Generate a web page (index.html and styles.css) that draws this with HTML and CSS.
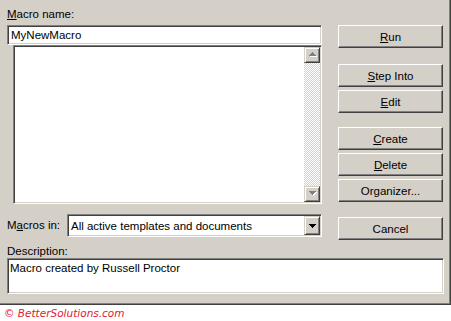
FILE: index.html
```html
<!DOCTYPE html>
<html lang="en">
<head>
    <meta charset="UTF-8">
    <title>Macros</title>
    <link rel="stylesheet" href="styles.css">
</head>
<body>
    <div class="dialog">
        <div class="main">
            <div class="left">
                <label class="label name-label"><span class="key">M</span>acro name:</label>
                <div class="field name-field">MyNewMacro</div>
                <div class="field listbox">
                    <div class="list-items"></div>
                    <div class="scrollbar">
                        <div class="scroll-btn">
                            <svg width="9" height="6" viewBox="0 0 9 6">
                                <path d="M5 1h1v1h1v1h1v1h1v1H2V4h1V3h1V2h1z" fill="#fff"></path>
                                <path d="M4 0h1v1h1v1h1v1h1v1H1V3h1V2h1V1h1z" fill="#808080"></path>
                            </svg>
                        </div>
                        <div class="track"></div>
                        <div class="scroll-btn">
                            <svg width="9" height="6" viewBox="0 0 9 6">
                                <path d="M2 1h7v1H8v1H7v1H6v1H5V4H4V3H3V2H2z" fill="#fff"></path>
                                <path d="M1 0h7v1H7v1H6v1H5v1H4V3H3V2H2V1H1z" fill="#808080"></path>
                            </svg>
                        </div>
                    </div>
                </div>
                <div class="macros-in">
                    <label class="label in-label">M<span class="key">a</span>cros in:</label>
                    <div class="field combo">
                        <span class="combo-text">All active templates and documents</span>
                        <div class="scroll-btn combo-btn">
                            <svg width="7" height="4" viewBox="0 0 7 4">
                                <path d="M0 0h7v1H6v1H5v1H4v1H3V3H2V2H1V1H0z" fill="#000"></path>
                            </svg>
                        </div>
                    </div>
                </div>
            </div>

            <div class="buttons">
                <button class="btn"><span class="key">R</span>un</button>
                <button class="btn step"><span class="key">S</span>tep Into</button>
                <button class="btn near"><span class="key">E</span>dit</button>
                <button class="btn create"><span class="key">C</span>reate</button>
                <button class="btn near"><span class="key">D</span>elete</button>
                <button class="btn near">Or<span class="key">g</span>anizer...</button>
                <button class="btn cancel">Cancel</button>
            </div>
        </div>

        <label class="label desc-label">Description:</label>
        <div class="field desc-field">Macro created by Russell Proctor</div>
    </div>

    <div class="credit">© BetterSolutions.com</div>
</body>
</html>
```

FILE: styles.css
```css
body {
    margin: 0;
    padding: 0;
    font-family: "Liberation Sans", Arial, sans-serif;
    font-size: 11.5px;
    color: #000000;
    background-color: #ffffff;
}

.dialog {
    width: 451px;
    height: 305px;
    box-sizing: border-box;
    padding: 0 5px 0 7px;
    background-color: #d4d0c8;
    border-right: 1px solid #404040;
    border-bottom: 1px solid #404040;
    box-shadow: inset -1px -1px #808080;
}

.main {
    display: flex;
    gap: 16px;
}

.left {
    width: 315px;
    display: flex;
    flex-direction: column;
}

.label {
    display: block;
    height: 13px;
    line-height: 13px;
}

.key {
    text-decoration: underline;
}

.name-label {
    margin-top: 8px;
    margin-bottom: 4px;
}

/* sunken white boxes */
.field {
    box-sizing: border-box;
    background-color: #ffffff;
    border: 1px solid;
    border-color: #808080 #ffffff #ffffff #808080;
    box-shadow: inset 1px 1px #404040, inset -1px -1px #d4d0c8;
}

.name-field {
    height: 20px;
    line-height: 18px;
    padding-left: 3px;
}

.listbox {
    margin-left: 6px;
    width: 309px;
    height: 159px;
    padding: 1px;
    display: flex;
}

.list-items {
    flex: 1;
}

.scrollbar {
    width: 16px;
    display: flex;
    flex-direction: column;
}

.scroll-btn {
    box-sizing: border-box;
    width: 16px;
    height: 16px;
    background-color: #d4d0c8;
    border: 1px solid;
    border-color: #d4d0c8 #404040 #404040 #d4d0c8;
    box-shadow: inset 1px 1px #ffffff, inset -1px -1px #808080;
    display: flex;
    justify-content: center;
    align-items: center;
}

.track {
    flex: 1;
    background: repeating-conic-gradient(#ffffff 0 25%, #d4d0c8 0 50%) 0 0 / 2px 2px;
}

.macros-in {
    margin-top: 10px;
    display: flex;
    align-items: center;
}

.in-label {
    width: 60px;
}

.combo {
    width: 255px;
    height: 23px;
    padding: 1px;
    display: flex;
    align-items: center;
}

.combo-text {
    flex: 1;
    padding-left: 2px;
}

.combo-btn {
    height: 19px;
}

.buttons {
    width: 105px;
    padding-top: 25px;
    display: flex;
    flex-direction: column;
}

.btn {
    width: 105px;
    height: 23px;
    padding: 0;
    font: inherit;
    color: #000000;
    background-color: #d4d0c8;
    border: 1px solid;
    border-color: #ffffff #404040 #404040 #ffffff;
    box-shadow: inset -1px -1px #808080;
    text-align: center;
}

.step {
    margin-top: 16px;
}

.near {
    margin-top: 3px;
}

.create {
    margin-top: 14px;
}

.cancel {
    margin-top: 15px;
}

.desc-label {
    margin-top: 5px;
}

.desc-field {
    width: 437px;
    height: 36px;
    padding: 3px 2px;
    line-height: 13px;
}

.credit {
    padding: 2px 0 0 4px;
    font-family: "DejaVu Sans", Verdana, sans-serif;
    font-size: 10.5px;
    font-style: italic;
    color: #e4202c;
}
```
